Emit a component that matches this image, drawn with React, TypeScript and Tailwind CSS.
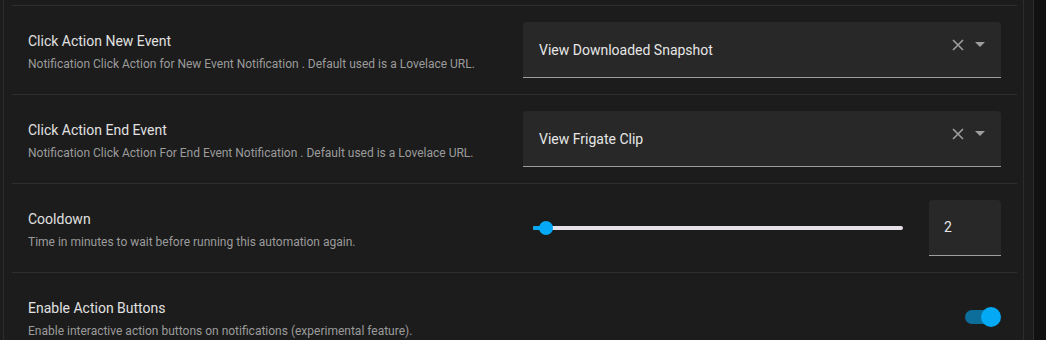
import { useState } from 'react';

const font = "font-['Roboto','Noto_Sans',sans-serif]";

function Row({ title, desc, children }: { title: string; desc: string; children: React.ReactNode }) {
  return (
    <div className="h-[89px] flex items-center justify-between pl-[16px] pr-[16px] border-t border-[#2f2f2f]">
      <div className="flex flex-col pt-[3px]">
        <div className="text-[14px] leading-[20px] text-[#e1e1e1]">{title}</div>
        <div className="text-[12px] leading-[16px] text-[#9b9b9b] mt-[5px]">{desc}</div>
      </div>
      {children}
    </div>
  );
}

function SelectBox({ value }: { value: string }) {
  return (
    <div className="w-[478px] h-[56px] bg-[#282828] rounded-t-[4px] border-b border-[#9e9e9e] flex items-center pl-[16px] pr-[16px]">
      <span className="flex-1 text-[14px] text-[#e6e6e6] pt-[2px]">{value}</span>
      <div className="flex items-center gap-[11px] -mt-[10px]">
        <svg width="12" height="12" viewBox="0 0 12 12">
          <path d="M1 1 L11 11 M11 1 L1 11" stroke="#9e9e9e" strokeWidth="1.6" />
        </svg>
        <svg width="10" height="5" viewBox="0 0 10 5">
          <path d="M0 0 L10 0 L5 5 Z" fill="#9e9e9e" />
        </svg>
      </div>
    </div>
  );
}

export default function App() {
  const [cooldown] = useState(2);
  const [enabled, setEnabled] = useState(true);

  return (
    <div className={`${font} w-[1046px] h-[340px] bg-[#111111] flex overflow-hidden`}>
      <div className="w-[1034px] bg-[#1c1c1c] border-r border-[#2c2c2c] flex">
        <div className="w-[1021px] border-l border-r border-[#2c2c2c] ml-[3px] pl-[8px] pr-[6px] pt-[5px]">
          <Row title="Click Action New Event" desc="Notification Click Action for New Event Notification . Default used is a Lovelace URL.">
            <SelectBox value="View Downloaded Snapshot" />
          </Row>
          <Row title="Click Action End Event" desc="Notification Click Action For End Event Notification . Default used is a Lovelace URL.">
            <SelectBox value="View Frigate Clip" />
          </Row>
          <Row title="Cooldown" desc="Time in minutes to wait before running this automation again.">
            <div className="flex items-center">
              <div className="relative w-[370px] h-[4px] bg-[#e6e1e8] rounded-full mr-[26px]">
                <div className="absolute left-0 top-0 h-[4px] w-[13px] bg-[#03a9f4] rounded-l-full" />
                <div className="absolute left-[6px] top-[-5px] w-[14px] h-[14px] rounded-full bg-[#03a9f4]" />
              </div>
              <div className="w-[72px] h-[56px] bg-[#282828] rounded-t-[4px] border-b border-[#9e9e9e] flex items-center pl-[15px] text-[14px] text-[#e6e6e6]">
                {cooldown}
              </div>
            </div>
          </Row>
          <Row title="Enable Action Buttons" desc="Enable interactive action buttons on notifications (experimental feature).">
            <button onClick={() => setEnabled(!enabled)} className="relative w-[36px] h-[20px] flex items-center">
              <div className="w-[32px] h-[14px] rounded-full bg-[#0e6e9b]" />
              <div className={`absolute top-0 w-[20px] h-[20px] rounded-full bg-[#03a9f4] ${enabled ? 'left-[16px]' : 'left-0'}`} />
            </button>
          </Row>
        </div>
      </div>
    </div>
  );
}
